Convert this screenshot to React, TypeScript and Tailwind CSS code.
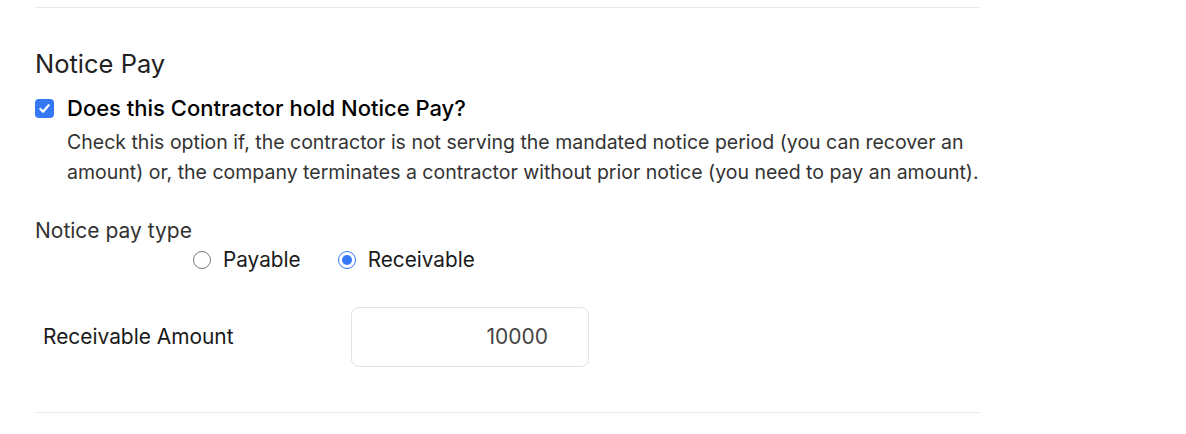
const Radio = ({ checked, label }: { checked?: boolean; label: string }) => (
  <label className="flex items-center gap-3">
    {checked ? (
      <span className="flex h-[18px] w-[18px] shrink-0 items-center justify-center rounded-full border-[1.5px] border-[#3478f6] bg-white">
        <span className="h-[10px] w-[10px] rounded-full bg-[#3478f6]" />
      </span>
    ) : (
      <span className="h-[18px] w-[18px] shrink-0 rounded-full border border-[#777777] bg-white" />
    )}
    <span>{label}</span>
  </label>
);

export default function App() {
  return (
    <div className="min-h-[434px] bg-white pt-[7px] font-['Inter',sans-serif] text-[#1f1f1f]">
      <div className="ml-[35px] w-[945px]">
        <div className="border-t border-[#e8e8e8]" />

        <h2 className="mt-[40px] text-[25.5px] leading-[32px] font-normal text-[#222222]">
          Notice Pay
        </h2>

        <div className="mt-[16px] flex items-start gap-[13px]">
          <span className="mt-[3px] flex h-[19px] w-[19px] shrink-0 items-center justify-center rounded-[4px] bg-[#3478f6]">
            <svg width="13" height="13" viewBox="0 0 14 14" fill="none">
              <path
                d="M2.5 7.5 L5.5 10.5 L11.5 3.5"
                stroke="white"
                strokeWidth="2.4"
                strokeLinecap="round"
                strokeLinejoin="round"
              />
            </svg>
          </span>
          <div>
            <p className="text-[22px] leading-[24px] font-medium text-black">
              Does this Contractor hold Notice Pay?
            </p>
            <p className="mt-[7px] text-[19.5px] leading-[30px] text-[#333333]">
              Check this option if, the contractor is not serving the mandated notice period (you can
              recover an amount) or, the company terminates a contractor without prior notice (you need
              to pay an amount).
            </p>
          </div>
        </div>

        <p className="mt-[32px] text-[21px] leading-[24px] text-[#333333]">Notice pay type</p>

        <div className="mt-[5px] ml-[158px] flex items-center gap-[37px] text-[20.75px] leading-[24px] text-[#1a1a1a]">
          <Radio label="Payable" />
          <Radio checked label="Receivable" />
        </div>

        <div className="mt-[35px] flex items-center pl-[8px]">
          <span className="w-[308px] shrink-0 text-[20.9px] leading-[24px] text-[#1a1a1a]">Receivable Amount</span>
          <div className="flex h-[60px] w-[238px] items-center justify-end rounded-[8px] border border-[#e3e3e3] pr-[40px] text-[21px] text-[#444444]">
            10000
          </div>
        </div>

        <div className="mt-[45px] border-t border-[#e8e8e8]" />
      </div>
    </div>
  );
}
